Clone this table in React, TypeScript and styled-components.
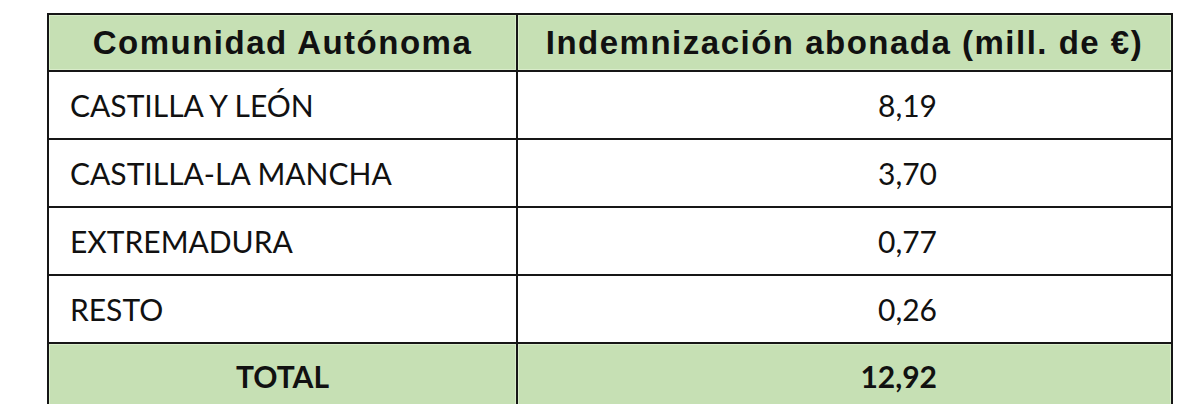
import styled, { createGlobalStyle } from "styled-components";

const GlobalStyle = createGlobalStyle`
  html, body {
    margin: 0;
    padding: 0;
    background: #ffffff;
  }
`;

const rows = [
  { name: "CASTILLA Y LEÓN", value: "8,19" },
  { name: "CASTILLA-LA MANCHA", value: "3,70" },
  { name: "EXTREMADURA", value: "0,77" },
  { name: "RESTO", value: "0,26" },
];

const Page = styled.div`
  width: 1200px;
  height: 404px;
  overflow: hidden;
  padding: 13px 0 0 47px;
  box-sizing: border-box;
`;

const Table = styled.table`
  border-collapse: collapse;
  table-layout: fixed;
  width: 1125px;
  color: #111;
`;

const HeadCell = styled.th`
  height: 55px;
  padding: 0;
  border: 2px solid #161616;
  background: #c6e0b4;
  box-shadow: inset 0 0 0 1px #d9ecca;
  font-family: "Liberation Sans", Arial, sans-serif;
  font-weight: bold;
  font-size: 33px;
  letter-spacing: 1.5px;
  text-align: center;
  vertical-align: middle;
`;

const NameCell = styled.td`
  height: 66px;
  padding: 0 0 0 21px;
  border: 2px solid #161616;
  background: #ffffff;
  font-family: Lato, "Open Sans", sans-serif;
  font-size: 30px;
  line-height: 1;
  text-align: left;
  vertical-align: middle;
`;

const ValueCell = styled.td`
  height: 66px;
  padding: 0 234px 0 0;
  border: 2px solid #161616;
  background: #ffffff;
  font-family: Lato, "Open Sans", sans-serif;
  font-size: 30px;
  line-height: 1;
  text-align: right;
  vertical-align: middle;
`;

const TotalCell = styled.td<{ $right?: boolean }>`
  height: 64px;
  padding: ${(p) => (p.$right ? "0 234px 0 0" : "0")};
  border: 2px solid #161616;
  background: #c6e0b4;
  box-shadow: inset 0 0 0 1px #d9ecca;
  font-family: Lato, "Open Sans", sans-serif;
  font-weight: bold;
  font-size: 30px;
  line-height: 1;
  text-align: ${(p) => (p.$right ? "right" : "center")};
  vertical-align: middle;
`;

export default function App() {
  return (
    <Page>
      <GlobalStyle />
      <Table>
        <colgroup>
          <col style={{ width: 469 }} />
          <col style={{ width: 655 }} />
        </colgroup>
        <thead>
          <tr>
            <HeadCell>Comunidad Autónoma</HeadCell>
            <HeadCell>Indemnización abonada (mill. de €)</HeadCell>
          </tr>
        </thead>
        <tbody>
          {rows.map((r) => (
            <tr key={r.name}>
              <NameCell>{r.name}</NameCell>
              <ValueCell>{r.value}</ValueCell>
            </tr>
          ))}
          <tr>
            <TotalCell>TOTAL</TotalCell>
            <TotalCell $right>12,92</TotalCell>
          </tr>
        </tbody>
      </Table>
    </Page>
  );
}
